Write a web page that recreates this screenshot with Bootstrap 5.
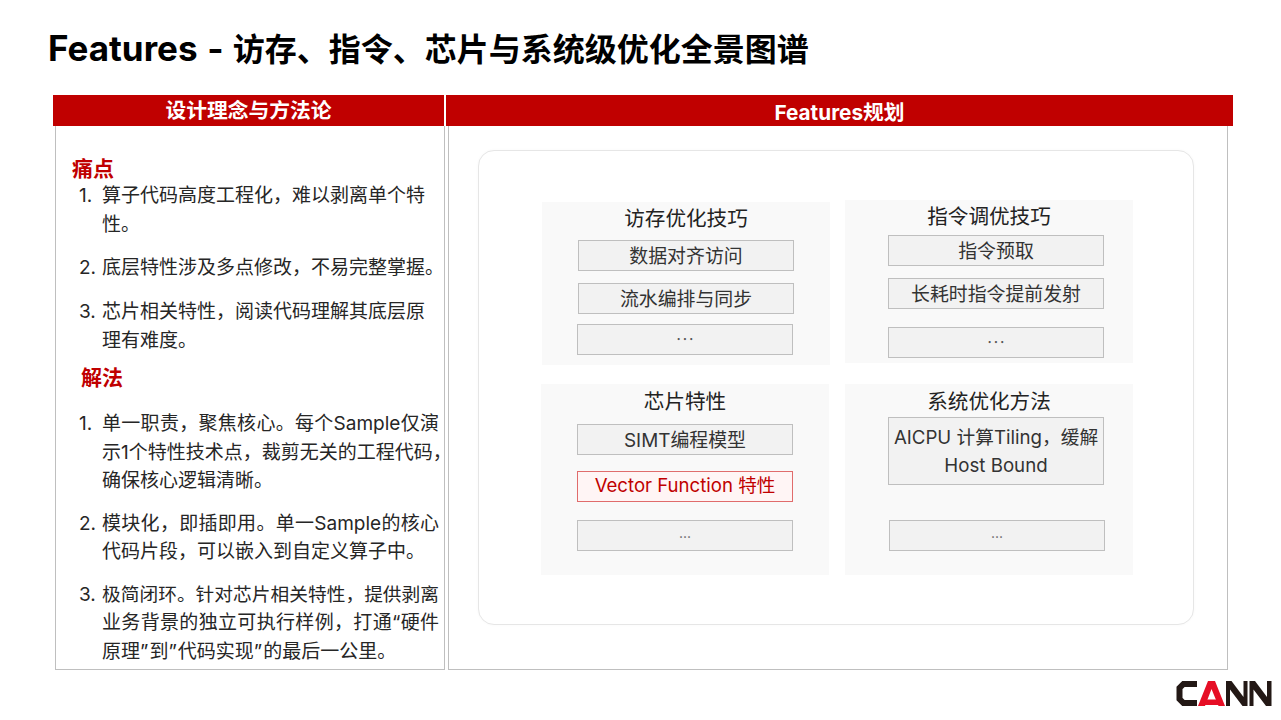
<!DOCTYPE html>
<html lang="zh-CN">
<head>
<meta charset="utf-8">
<title>Features</title>
<link href="https://cdn.jsdelivr.net/npm/bootstrap@5.3.0/dist/css/bootstrap.min.css" rel="stylesheet">
<style>
html,body{margin:0;background:#fff;}
body{width:1281px;height:720px;overflow:hidden;font-family:Inter,"Noto Sans CJK SC",sans-serif;color:#262626;}
.slide{width:1281px;height:720px;padding:26px 0 0 48px;}
.slide-title{font-family:Inter,"Noto Sans CJK SC",sans-serif;font-size:32px;line-height:44px;height:44px;font-weight:700;color:#000;margin:0 0 25px;white-space:nowrap;word-spacing:1.5px;}
.slide-title .latin{font-size:35px;}
.bars{margin-left:5px;gap:2px;}
.bar{height:31px;background:#c00000;color:#fff;font-weight:700;font-size:20.75px;line-height:31px;text-align:center;}
.bar-l{width:391px;}
.bar-r{width:787px;}
.bar-r span{position:relative;top:2px;}
.panels{margin-left:7px;gap:3px;}
.panel{height:544px;border:1px solid #bfbfbf;border-top:0;}
.panel-l{width:390px;padding:30px 0 0 16px;}
.panel-r{width:780px;padding:24px 0 0 29px;}
.pain{color:#c00000;font-weight:700;font-size:21px;line-height:25px;margin:0 0 1px;}
.pain-b{margin:10px 0 20px 9px;}
.steps{margin:0;padding:0 0 0 7px;font-size:19px;line-height:28.5px;white-space:nowrap;}
.steps li{margin-bottom:15.3px;}
.steps li:last-child{margin-bottom:0;}
.steps-b li{margin-bottom:14px;}
.steps .n{width:23px;flex:none;}
.fit{display:block;width:337px;text-align:justify;text-align-last:justify;}
.fit-s{font-size:18.7px;}
.q{letter-spacing:1px;}
.board{width:716px;height:475px;border:1px solid #e6e6e6;border-radius:16px;background:#fff;padding:0 0 0 62px;box-shadow:0 0 3px rgba(0,0,0,.03);}
.zone{width:288px;background:#f9f9f9;}
.zone h3{font-size:20.6px;font-weight:400;line-height:30px;text-align:center;margin:0;color:#222;}
.z1{height:163px;margin:51px 15px 0 1px;padding-top:2px;}
.z2{height:163px;margin-top:49px;padding-top:2px;}
.z3{height:191px;margin:19px 16px 0 0;padding-top:3px;}
.z4{height:191px;margin-top:19px;padding-top:3px;}
.cell{width:216px;height:31px;background:#f2f2f2;border:1px solid #bfbfbf;font-size:18.9px;line-height:31px;text-align:center;color:#333;white-space:nowrap;}
.c-x0{margin-left:36px;}
.c-x1{margin-left:35px;}
.c-x2{margin-left:43px;}
.c-x3{margin-left:44px;}
.cell-hot{background:#fff5f5;border-color:#e06c6c;color:#c00000;line-height:27px;font-size:18.6px;}
.cell-tall{height:68px;line-height:28px;padding-top:6px;font-size:18.7px;}
.wide-dots{font-family:"Noto Sans CJK SC",sans-serif;line-height:27px;color:#555;font-weight:300;}
.dots{font-size:14px;line-height:24px;color:#666;}
.foot-logo{position:absolute;left:1176px;top:680px;}
</style>
</head>
<body>
<div class="slide position-relative">
  <h1 class="slide-title"><span class="latin">Features -</span> 访存、指令、芯片与系统级优化全景图谱</h1>
  <div class="d-flex bars">
    <div class="bar bar-l">设计理念与方法论</div>
    <div class="bar bar-r"><span>Features规划</span></div>
  </div>
  <div class="d-flex panels">
    <div class="panel panel-l">
      <p class="pain">痛点</p>
      <ol class="list-unstyled steps">
        <li class="d-flex"><span class="n">1.</span><span>算子代码高度工程化，难以剥离单个特<br>性。</span></li>
        <li class="d-flex"><span class="n">2.</span><span>底层特性涉及多点修改，不易完整掌握。</span></li>
        <li class="d-flex"><span class="n">3.</span><span>芯片相关特性，阅读代码理解其底层原<br>理有难度。</span></li>
      </ol>
      <p class="pain pain-b">解法</p>
      <ol class="list-unstyled steps steps-b">
        <li class="d-flex"><span class="n">1.</span><span><span class="fit">单一职责，聚焦核心。每个Sample仅演</span>示1个特性技术点，裁剪无关的工程代码，<br>确保核心逻辑清晰。</span></li>
        <li class="d-flex"><span class="n">2.</span><span><span class="fit">模块化，即插即用。单一Sample的核心</span>代码片段，可以嵌入到自定义算子中。</span></li>
        <li class="d-flex"><span class="n">3.</span><span><span class="fit fit-s">极简闭环。针对芯片相关特性，提供剥离</span><span class="fit">业务背景的独立可执行样例，打通“硬件</span>原理<span class="q">”</span>到<span class="q">”</span>代码实现<span class="q">”</span>的最后一公里。</span></li>
      </ol>
    </div>
    <div class="panel panel-r">
      <div class="board">
        <div class="d-flex">
          <section class="zone z1">
            <h3>访存优化技巧</h3>
            <div class="cell c-x0" style="margin-top:6px">数据对齐访问</div>
            <div class="cell c-x0" style="margin-top:12px">流水编排与同步</div>
            <div class="cell c-x1 wide-dots" style="margin-top:10px">…</div>
          </section>
          <section class="zone z2">
            <h3>指令调优技巧</h3>
            <div class="cell c-x2" style="margin-top:3px">指令预取</div>
            <div class="cell c-x2" style="margin-top:12px">长耗时指令提前发射</div>
            <div class="cell c-x2 wide-dots" style="margin-top:18px">…</div>
          </section>
        </div>
        <div class="d-flex">
          <section class="zone z3">
            <h3>芯片特性</h3>
            <div class="cell c-x0" style="margin-top:7px">SIMT编程模型</div>
            <div class="cell cell-hot c-x0" style="margin-top:16px">Vector Function 特性</div>
            <div class="cell c-x0 dots" style="margin-top:18px">...</div>
          </section>
          <section class="zone z4">
            <h3>系统优化方法</h3>
            <div class="cell cell-tall c-x2">AICPU 计算Tiling，缓解<br>Host Bound</div>
            <div class="cell c-x3 dots" style="margin-top:35px">...</div>
          </section>
        </div>
      </div>
    </div>
  </div>
  <svg class="foot-logo" width="96" height="27" viewBox="0 0 96 27" role="img" aria-label="CANN">
    <path d="M21 4H7.5L3.5 8V19L7.5 23H21" fill="none" stroke="#231815" stroke-width="6"/>
    <path d="M22 26L32 1H39L49 26H42.5L35.5 9L29 26Z" fill="#e60e25"/>
    <path d="M30 19.5H41L43 25H28Z" fill="#e60e25"/>
    <path d="M50 26V1H55.5L67.5 17V1H71.5V26H66.5L54 9.5V26Z" fill="#231815"/>
    <path d="M73.5 26V1H79L91 17V1H95.5V26H90L77.5 9.5V26Z" fill="#231815"/>
  </svg>
</div>
</body>
</html>
